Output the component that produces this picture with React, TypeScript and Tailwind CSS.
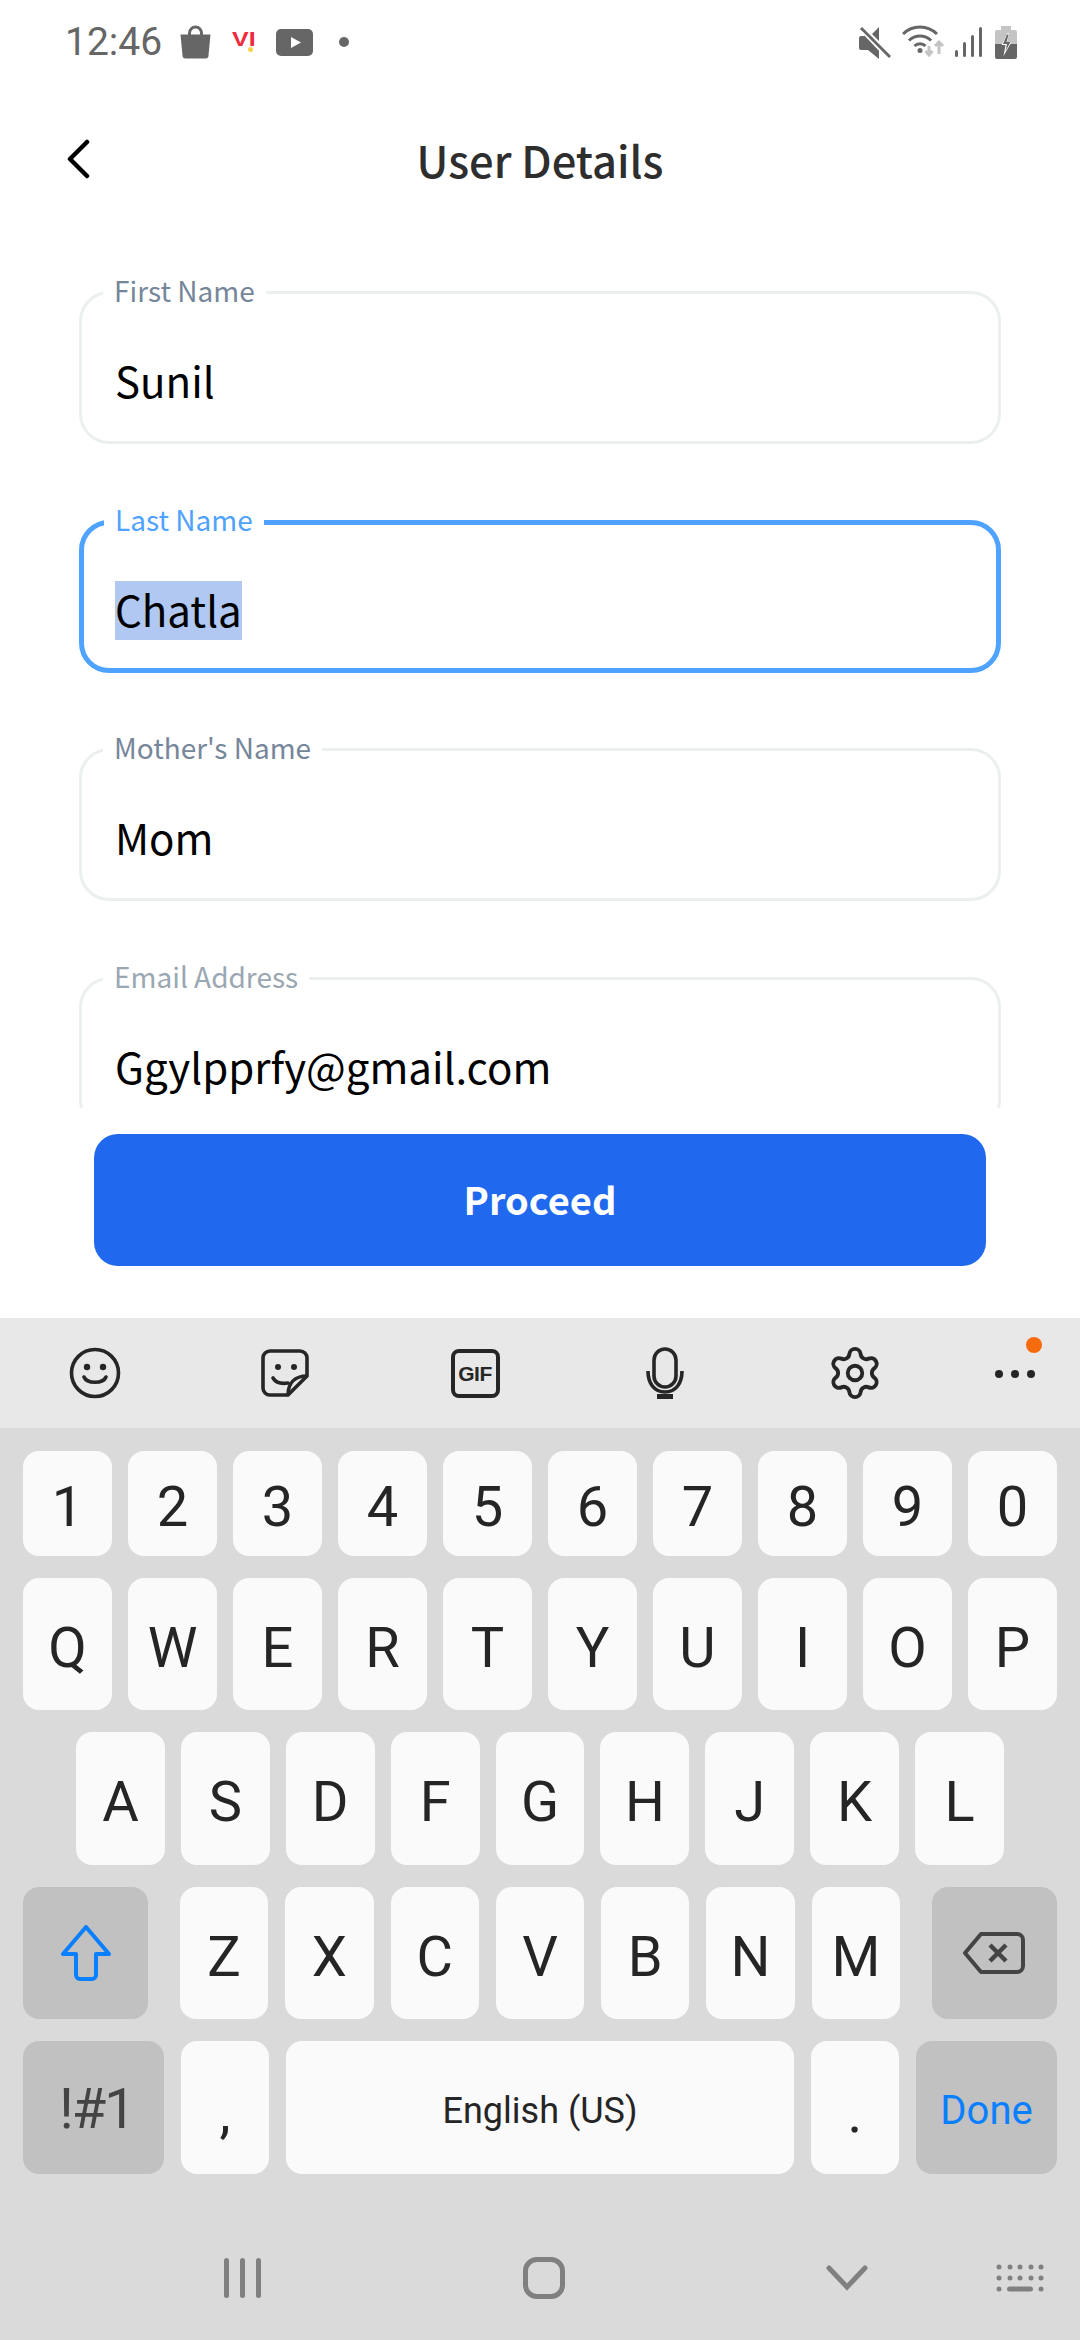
import React from 'react';
import { Settings } from 'lucide-react';

const cjk = "font-['Noto_Sans_CJK_SC','Noto_Sans',sans-serif]";

const BagIcon = () => (
  <svg width="31" height="34" viewBox="0 0 31 34" className="ml-[18px]">
    <path d="M9.5 11V8a6 6 0 0 1 12 0v3" fill="none" stroke="#666" strokeWidth="3" />
    <path d="M0.5 9.5h30l-2 21a3 3 0 0 1-3 3h-20a3 3 0 0 1-3-3z" fill="#666" />
  </svg>
);

const ViLogo = () => (
  <div className="relative ml-[21px] h-[24px] w-[26px]">
    <span className="absolute left-0 top-[-4px] origin-left scale-x-[1.25] font-['Liberation_Sans',sans-serif] text-[20px] leading-[26px] font-bold text-[#ee2b3e]">VI</span>
    <span className="absolute left-[16px] top-[17px] h-[5px] w-[5px] rounded-full bg-[#f6d24a]" />
  </div>
);

const YoutubeIcon = () => (
  <svg width="37" height="27" viewBox="0 0 37 27" className="ml-[18px]">
    <rect width="37" height="27" rx="5" fill="#666" />
    <path d="M15 8l10 5.5-10 5.500z" fill="#fff" />
  </svg>
);

const MuteIcon = () => (
  <svg width="32" height="34" viewBox="0 0 32 34">
    <path d="M2 11h5l3 3 10 11v9l-11-9H2a2 2 0 0 1-2-2v-10a2 2 0 0 1 2-2z M20 2v14L13 9z" fill="#666" />
    <path d="M2 3l29 29" stroke="#666" strokeWidth="3" />
    <path d="M7 4l25 26" stroke="#fff" strokeWidth="1.500" transform="translate(-4 3)" />
  </svg>
);

const WifiIcon = () => (
  <svg width="44" height="34" viewBox="0 0 44 34" className="ml-[11px]">
    <g fill="none" stroke="#666" strokeWidth="3">
      <path d="M1 9a24 24 0 0 1 34 0" />
      <path d="M7 15.500a15.500 15.500 0 0 1 22 0" />
      <path d="M12.500 21a8 8 0 0 1 11 0" />
    </g>
    <circle cx="18" cy="25.500" r="2.500" fill="#666" />
    <path d="M27 21v9m-3.500-4l3.500 4 3.500-4" fill="none" stroke="#c4c4c4" strokeWidth="3" />
    <path d="M37 29v-12m-4 4l4-4 4 4" fill="none" stroke="#c4c4c4" strokeWidth="3" />
  </svg>
);

const SignalIcon = () => (
  <div className="ml-[9px] flex h-[30px] items-end gap-[5px]">
    <div className="h-[7px] w-[3px] rounded-full bg-[#666]" />
    <div className="h-[15px] w-[3px] rounded-full bg-[#666]" />
    <div className="h-[22px] w-[3px] rounded-full bg-[#666]" />
    <div className="h-[30px] w-[3px] rounded-full bg-[#666]" />
  </div>
);

const BatteryIcon = () => (
  <svg width="22" height="33" viewBox="0 0 22 33" className="ml-[13px]">
    <rect x="6" width="10" height="4" fill="#c4c4c4" />
    <path d="M2 4h18a2 2 0 0 1 2 2v12H0V6a2 2 0 0 1 2-2z" fill="#c4c4c4" />
    <path d="M0 18h22v13a2 2 0 0 1-2 2H2a2 2 0 0 1-2-2z" fill="#666" />
    <path d="M12.500 7L6.500 19h4l-2 11 8-14h-4.500l2-9z" fill="#fff" />
    <path d="M12 8.500L8 18h4l-1.500 7 5-9h-4l2-7.500z" fill="#666" />
  </svg>
);

const StatusBar = () => (
  <div className="flex h-[72px] items-center pt-[12px] pl-[65px] pr-[63px]">
    <span className="font-['Roboto',sans-serif] text-[39px] leading-none text-[#666]">12:46</span>
    <BagIcon />
    <ViLogo />
    <YoutubeIcon />
    <div className="ml-[26px] h-[10px] w-[10px] rounded-full bg-[#666]" />
    <div className="ml-auto flex items-center">
      <MuteIcon />
      <WifiIcon />
      <SignalIcon />
      <BatteryIcon />
    </div>
  </div>
);

const Header = () => (
  <div className="relative flex h-[178px] items-center justify-center">
    <svg width="24" height="40" viewBox="0 0 24 40" className="absolute left-[66px] top-[67px]">
      <path d="M21 3L4 20l17 17" fill="none" stroke="#000" strokeWidth="4.500" strokeLinecap="round" strokeLinejoin="round" />
    </svg>
    <h1 className={`${cjk} -mt-[2px] text-[43.5px] leading-none font-medium text-[#2e2e2e]`}>User Details</h1>
  </div>
);

type FieldProps = {
  label: string;
  value: string;
  focused?: boolean;
  labelClass?: string;
};

const Field = ({ label, value, focused, labelClass = 'text-[#76869a]' }: FieldProps) => (
  <div
    className={`relative flex h-[153px] shrink-0 items-center rounded-[30px] pt-[28px] ${
      focused ? 'border-[5px] border-[#4fa3ff] pl-[31px]' : 'border-[3px] border-[#eceff0] pl-[33px]'
    }`}
  >
    <label
      className={`${cjk} absolute bg-white px-[11px] text-[28px] leading-[36px] ${
        focused ? '-top-[24px] left-[20px] text-[#4fa3ff]' : '-top-[22px] left-[21px] ' + labelClass
      }`}
    >
      {label}
    </label>
    <span className={`${cjk} ${focused ? 'bg-[#b0c8f2]' : ''} h-[59px] text-[42px] leading-[55px] text-black`}>
      {value}
    </span>
  </div>
);

const Form = () => (
  <div className="flex h-[858px] flex-col gap-[75.5px] overflow-hidden px-[79px] pt-[41px]">
    <Field label="First Name" value="Sunil" />
    <Field label="Last Name" value="Chatla" focused />
    <Field label="Mother's Name" value="Mom" />
    <Field label="Email Address" value="Ggylpprfy@gmail.com" labelClass="text-[#9aa7b2]" />
  </div>
);

const SmileIcon = () => (
  <svg width="52" height="52" viewBox="0 0 52 52">
    <circle cx="26" cy="26" r="23.500" fill="none" stroke="#262626" strokeWidth="3.600" />
    <circle cx="18" cy="20" r="3.200" fill="#262626" />
    <circle cx="34" cy="20" r="3.200" fill="#262626" />
    <path d="M15 30c3 7 19 7 22 0" fill="none" stroke="#262626" strokeWidth="3.600" strokeLinecap="round" />
  </svg>
);

const StickerIcon = () => (
  <svg width="50" height="50" viewBox="0 0 50 50">
    <path d="M28 47H10a7 7 0 0 1-7-7V10a7 7 0 0 1 7-7h30a7 7 0 0 1 7 7v18z" fill="none" stroke="#262626" strokeWidth="3.600" strokeLinejoin="round" />
    <path d="M28 47c0-12 7-19 19-19" fill="none" stroke="#262626" strokeWidth="3.600" />
    <circle cx="18" cy="19" r="3" fill="#262626" />
    <circle cx="34" cy="19" r="3" fill="#262626" />
    <path d="M13 30c3 5 9 6 15 5" fill="none" stroke="#262626" strokeWidth="3.600" strokeLinecap="round" />
  </svg>
);

const GifIcon = () => (
  <div className="flex h-[49px] w-[49px] items-center justify-center rounded-[8px] border-[4px] border-[#262626]">
    <span className="font-['Liberation_Sans',sans-serif] text-[21px] leading-none font-bold tracking-[-0.5px] text-[#262626]">GIF</span>
  </div>
);

const MicIcon = () => (
  <svg width="38" height="52" viewBox="0 0 38 52">
    <rect x="8" y="2" width="22" height="38" rx="11" fill="none" stroke="#262626" strokeWidth="3.600" />
    <path d="M2 24c0 12 6 21 17 21s17-9 17-21" fill="none" stroke="#262626" strokeWidth="3.600" />
    <rect x="11" y="47" width="16" height="5" fill="#262626" />
  </svg>
);

const MoreIcon = () => (
  <div className="relative flex items-center gap-[8px] pt-[2px]">
    <div className="h-[8px] w-[8px] rounded-full bg-[#262626]" />
    <div className="h-[8px] w-[8px] rounded-full bg-[#262626]" />
    <div className="h-[8px] w-[8px] rounded-full bg-[#262626]" />
    <div className="absolute -top-[31px] left-[31px] h-[16px] w-[16px] rounded-full bg-[#f76b0f]" />
  </div>
);

const Toolbar = () => (
  <div className="flex h-[110px] items-center bg-[#e8e8e8]">
    <div className="flex w-[190px] justify-center"><SmileIcon /></div>
    <div className="flex w-[190px] justify-center"><StickerIcon /></div>
    <div className="flex w-[190px] justify-center"><GifIcon /></div>
    <div className="flex w-[190px] justify-center"><MicIcon /></div>
    <div className="flex w-[190px] justify-center"><Settings size={58} strokeWidth={1.6} color="#262626" /></div>
    <div className="flex w-[130px] justify-center"><MoreIcon /></div>
  </div>
);

const Key = ({ label, className = '' }: { label: string; className?: string }) => (
  <div className={`flex items-center justify-center rounded-[16px] bg-[#fafafa] pt-[7px] font-['Roboto',sans-serif] text-[56px] leading-none text-[#252525] ${className}`}>
    {label}
  </div>
);

const KeyRow = ({ keys, className }: { keys: string; className: string }) => (
  <div className={`grid gap-[16px] ${className}`}>
    {keys.split('').map((k) => (
      <Key key={k} label={k} />
    ))}
  </div>
);

const Keyboard = () => (
  <div className="flex flex-col gap-[22px] bg-[#dadada] px-[23px] pt-[23px]">
    <KeyRow keys="1234567890" className="h-[105px] grid-cols-10" />
    <KeyRow keys="QWERTYUIOP" className="h-[132px] grid-cols-10" />
    <KeyRow keys="ASDFGHJKL" className="mx-[53px] h-[133px] grid-cols-9" />
    <div className="flex h-[132px] gap-[17px]">
      <div className="mr-[15px] flex w-[125px] items-center justify-center rounded-[16px] bg-[#c1c1c1]">
        <svg width="50" height="56" viewBox="0 0 50 56">
          <path d="M25 2L2 29h13v21a4 4 0 0 0 4 4h12a4 4 0 0 0 4-4V29h13z" fill="none" stroke="#0a7fff" strokeWidth="4" strokeLinejoin="round" />
        </svg>
      </div>
      {'ZXCVBNM'.split('').map((k) => (
        <Key key={k} label={k} className="flex-1" />
      ))}
      <div className="ml-[15px] flex w-[125px] items-center justify-center rounded-[16px] bg-[#c1c1c1]">
        <svg width="62" height="42" viewBox="0 0 62 42">
          <path d="M18 2h36a6 6 0 0 1 6 6v26a6 6 0 0 1-6 6H18L2 21z" fill="none" stroke="#444" strokeWidth="4" strokeLinejoin="round" />
          <path d="M27 13l16 16M43 13L27 29" fill="none" stroke="#444" strokeWidth="4.500" />
        </svg>
      </div>
    </div>
    <div className="flex h-[133px] gap-[17px]">
      <div className="flex w-[141px] items-center justify-center rounded-[16px] bg-[#c1c1c1] pl-[6px] pt-[2px] font-['Roboto',sans-serif] text-[56px] leading-none tracking-[-2px] text-[#444]">!#1</div>
      <Key label="," className="w-[88px] pt-[10px]" />
      <div className="flex flex-1 items-center justify-center rounded-[16px] bg-[#fafafa] pt-[6px] font-['Roboto',sans-serif] text-[36px] leading-none text-[#252525]">English (US)</div>
      <Key label="." className="w-[88px] pt-[10px]" />
      <div className="flex w-[141px] items-center justify-center rounded-[16px] bg-[#c1c1c1] pt-[6px] font-['Roboto',sans-serif] text-[40px] leading-none text-[#0a7fff]">Done</div>
    </div>
  </div>
);

const NavBar = () => (
  <div className="flex h-[166px] items-center bg-[#dadada] pl-[91px] pt-[42px]">
    <div className="flex w-[302px] justify-center gap-[11px]">
      <div className="h-[40px] w-[5px] rounded-full bg-[#808080]" />
      <div className="h-[40px] w-[5px] rounded-full bg-[#808080]" />
      <div className="h-[40px] w-[5px] rounded-full bg-[#808080]" />
    </div>
    <div className="flex w-[302px] justify-center">
      <div className="h-[42px] w-[42px] rounded-[14px] border-[5px] border-[#808080]" />
    </div>
    <div className="flex w-[302px] justify-center pl-[2px]">
      <svg width="42" height="26" viewBox="0 0 42 26">
        <path d="M3 3l18 19L39 3" fill="none" stroke="#808080" strokeWidth="5" strokeLinecap="round" />
      </svg>
    </div>
    <svg width="48" height="28" viewBox="0 0 48 28" className="-ml-[1px]">
      <g fill="#808080">
        <circle cx="3" cy="3" r="2.500" /><circle cx="14" cy="3" r="2.500" /><circle cx="24" cy="3" r="2.500" /><circle cx="35" cy="3" r="2.500" /><circle cx="45" cy="3" r="2.500" />
        <circle cx="3" cy="14" r="2.500" /><circle cx="14" cy="14" r="2.500" /><circle cx="24" cy="14" r="2.500" /><circle cx="35" cy="14" r="2.500" /><circle cx="45" cy="14" r="2.500" />
        <circle cx="3" cy="25" r="2.500" /><rect x="11" y="22.500" width="26" height="5" rx="2.500" /><circle cx="45" cy="25" r="2.500" />
      </g>
    </svg>
  </div>
);

export default function App() {
  return (
    <div className="flex h-[2340px] w-[1080px] flex-col overflow-hidden bg-white">
      <StatusBar />
      <Header />
      <Form />
      <div className="mx-[94px] mt-[26px] flex h-[132px] items-center justify-center rounded-[24px] bg-[#2069ee]">
        <span className={`${cjk} -mt-[3px] text-[38px] leading-none font-semibold text-white`}>Proceed</span>
      </div>
      <div className="mt-[52px]">
        <Toolbar />
        <Keyboard />
        <NavBar />
      </div>
    </div>
  );
}
